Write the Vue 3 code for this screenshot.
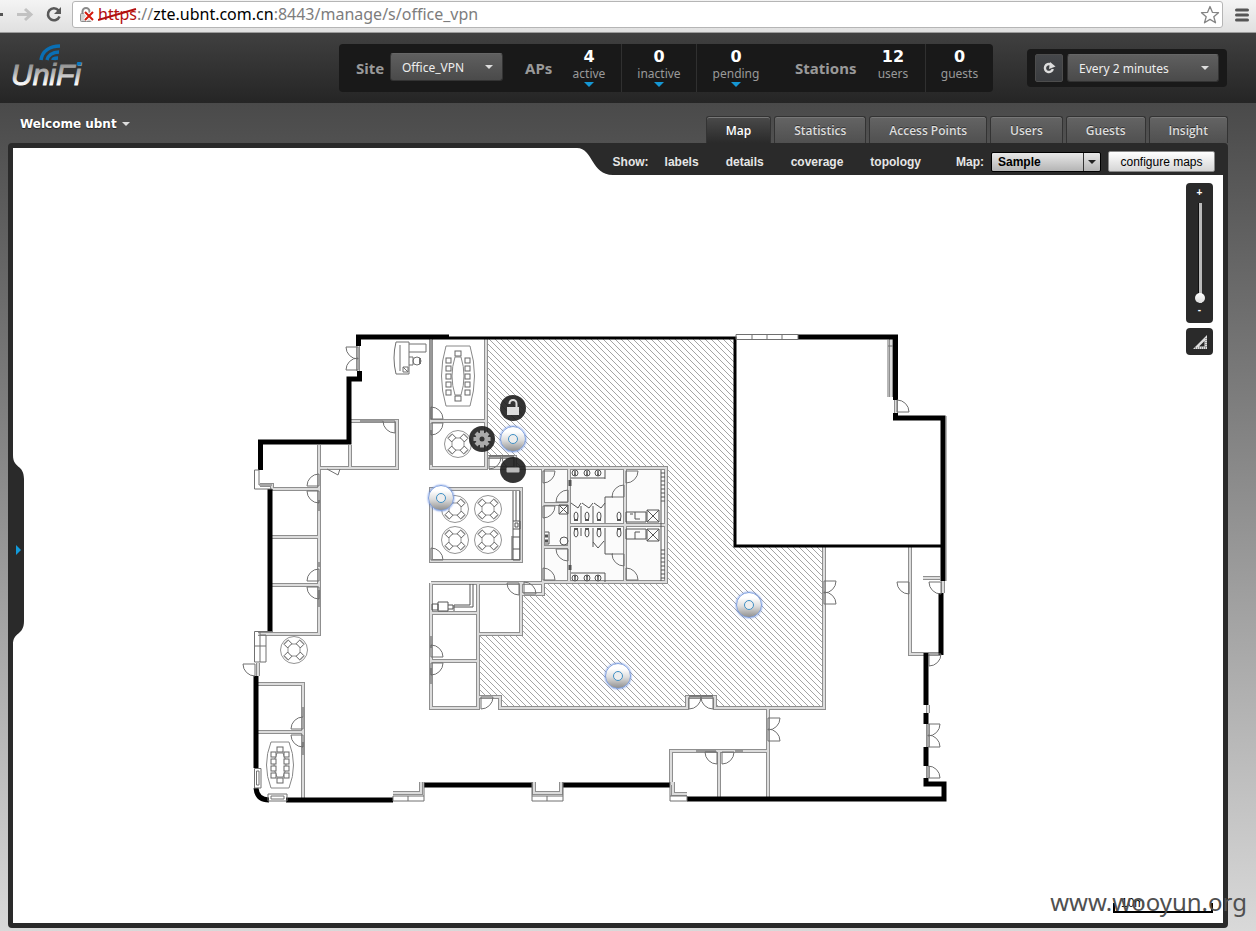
<script setup>
import { ref } from 'vue'

const MAP_X = 13
const MAP_Y = 148
const MAP_W = 1210
const MAP_H = 775

const site = ref('Office_VPN')
const interval = ref('Every 2 minutes')
const map = ref('Sample')
const zoom = ref(0)
const activeTab = ref('Map')

const tabs = ['Map', 'Statistics', 'Access Points', 'Users', 'Guests', 'Insight']
const layers = ['labels', 'details', 'coverage', 'topology']
const apStats = [
  { value: 4, label: 'active' },
  { value: 0, label: 'inactive' },
  { value: 0, label: 'pending' }
]
const stationStats = [
  { value: 12, label: 'users' },
  { value: 0, label: 'guests' }
]

const accessPoints = [[513, 439], [441, 498], [749, 605], [618, 676]]
const actions = [
  { name: 'unlock', at: [513, 408] },
  { name: 'settings', at: [482, 439] },
  { name: 'remove', at: [513, 470] }
]
const place = ([x, y]) => ({
  left: ((x - MAP_X) / MAP_W) * 100 + '%',
  top: ((y - MAP_Y) / MAP_H) * 100 + '%'
})

const heavy = [
  'M449 337H358.5V346', 'M359.5 371V379H349V442H260.5V470', 'M270 489V632', 'M256 676V768',
  'M256 788Q257 800 269 800', 'M286 800H393', 'M424 785H532', 'M563 785H670',
  'M687 799H944V784H926V778', 'M926 766V747', 'M926 724V713', 'M926 705V653', 'M941 655V593',
  'M943 581V418H895.5V413', 'M895.5 400V337H798'
].join('')

const walls = [
  'M431 339V468H486V339M431 421H486', 'M350 421H397V468H320M350 445V468',
  'M319 445V634H258M272 489H319M272 537H319M272 585H319',
  'M258 684H303V798M258 732H303', 'M431 489H521V561H431Z',
  'M431 583H543M431 583V708H478V583M431 613H478M431 661H478M478 634H521V583',
  'M522 594H543V468M489 468H666V582H543M569 468V582M543 504H569M543 547H569M569 525H666M625 468V582',
  'M488 457H515V468', 'M478 634V697H500V708H687V697H715V708H824V547',
  'M768 708V797M671 785V751H768M719 751V797', 'M910 547V654H941M923 578H940',
  'M258 663V676M260 485H272V489M393 793H421V782M534 782V793H561V782M673 782V794H687',
  'M928 705V713M928 724V747M928 766V778M943 581V593M896 400V413M891 339V397M358 346V371'
].join('')

const doors = [
  [358, 347, -1, 1], [358, 370, -1, -1], [431, 419, 1, -1], [431, 423, 1, 1], [395, 421, -1, 1],
  [319, 486, -1, -1], [319, 491, -1, 1], [319, 581, -1, -1], [319, 587, -1, 1], [431, 560, 1, -1],
  [543, 471, 1, 1], [568, 502, -1, -1], [543, 506, 1, 1], [568, 549, -1, 1], [543, 580, 1, -1],
  [626, 471, 1, 1], [626, 580, 1, -1], [624, 497, -1, -1], [624, 554, -1, 1], [489, 457, 1, 1],
  [514, 457, -1, 1], [519, 583, -1, 1], [524, 594, 1, -1], [431, 657, 1, -1], [431, 663, 1, 1],
  [481, 697, 1, 1], [689, 697, 1, 1], [713, 697, -1, 1], [717, 752, -1, 1], [722, 752, 1, 1],
  [824, 581, 1, 1], [824, 604, 1, -1], [768, 718, 1, 1], [768, 741, 1, -1], [909, 582, -1, 1],
  [941, 582, -1, 1], [929, 654, 1, 1], [928, 724, 1, 1], [928, 747, 1, -1], [928, 778, 1, -1],
  [897, 412, 1, -1], [303, 729, -1, -1], [303, 735, -1, 1], [255, 664, -1, 1]
]
const roundTables = [[458, 444], [455, 509], [488, 509], [455, 540], [488, 540], [294, 650]]
const confTables = [
  { x: 458, y: 376, w: 12, h: 30, rows: [-16, -8, 0, 8, 16] },
  { x: 280, y: 765, w: 9, h: 23, rows: [-11, -4, 3, 10] }
]
</script>

<template>
  <div class="page">
    <div class="browser">
      <svg class="nav-icons" viewBox="0 0 68 32" aria-hidden="true">
        <rect x="0" y="13" width="3" height="3" fill="#555" />
        <path d="M17 14.500H30M25 9L31 14.500L25 20" fill="none" stroke="#c2c2c2" stroke-width="3" />
        <path d="M58.500 10.300A6 6 0 1 0 59.500 16.500" fill="none" stroke="#595959" stroke-width="2.600" />
        <path d="M61 7V14H54Z" fill="#595959" />
      </svg>
      <div class="address">
        <svg class="lock" viewBox="0 0 16 18" aria-hidden="true">
          <path d="M3.500 8V5.500A3.500 3.500 0 0 1 10.500 5.500V8" fill="none" stroke="#8b8b8b" stroke-width="2" />
          <rect x="1.500" y="7.500" width="11" height="8" rx="1" fill="#d3d3d3" stroke="#8b8b8b" />
          <path d="M6 6L14 14M14 6L6 14" stroke="#fff" stroke-width="4" />
          <path d="M6 6L14 14M14 6L6 14" stroke="#d2190b" stroke-width="2" />
        </svg>
        <span class="url"><span class="scheme">https<svg viewBox="0 0 40 14" preserveAspectRatio="none" aria-hidden="true"><path d="M0 12L39 1" stroke="#b30f0f" stroke-width="2" /></svg></span>://<b>zte.ubnt.com.cn</b>:8443/manage/s/office_vpn</span>
        <svg class="star" viewBox="0 0 20 20" aria-hidden="true">
          <path d="M10 1.500L12.400 7.300L18.500 7.700L13.800 11.800L15.500 17.800L10 14.400L4.500 17.800L6.200 11.800L1.500 7.700L7.600 7.300Z" fill="#fff" stroke="#858585" stroke-width="1.300" stroke-linejoin="round" />
        </svg>
      </div>
      <svg class="menu" viewBox="0 0 14 14" aria-hidden="true">
        <path d="M1.500 2H12.500M1.500 7H12.500M1.500 12H12.500" stroke="#555" stroke-width="3" stroke-linecap="round" />
      </svg>
    </div>

    <header class="header">
      <svg class="logo" viewBox="0 0 80 52" role="img" aria-label="UniFi">
        <defs>
          <linearGradient id="metal" x1="0" y1="0" x2="0" y2="1">
            <stop offset="0" stop-color="#777" />
            <stop offset=".45" stop-color="#b5b5b5" />
            <stop offset=".8" stop-color="#fff" />
            <stop offset="1" stop-color="#aaa" />
          </linearGradient>
        </defs>
        <text x="1" y="42" class="logo-text" fill="url(#metal)" stroke="url(#metal)">UniFi</text>
        <g fill="none" stroke="#0a6fb4" stroke-width="3.500">
          <path d="M31 17C32 8 40 3 50 3" />
          <path d="M37 17C38 13 42 9 49 9" />
          <path d="M43 17C43 16 45 15 48 15" />
        </g>
        <path d="M67.500 19.500H71L70.500 22H67Z" fill="#0a7ac4" stroke="#0a7ac4" />
      </svg>

      <div class="stats">
        <label class="stats-title site" for="site">Site</label>
        <span class="dd dd-site">
          <select id="site" v-model="site"><option>Office_VPN</option></select>
        </span>
        <span class="stats-title aps">APs</span>
        <button v-for="s in apStats" :key="s.label" class="stat" :class="s.label" type="button">
          <strong>{{ s.value }}</strong><span>{{ s.label }}</span><i class="tri"></i>
        </button>
        <span class="stats-title stations">Stations</span>
        <button v-for="s in stationStats" :key="s.label" class="stat" :class="s.label" type="button">
          <strong>{{ s.value }}</strong><span>{{ s.label }}</span>
        </button>
      </div>

      <div class="refresh">
        <button type="button" class="reload" aria-label="Refresh now">
          <svg viewBox="0 0 14 14" aria-hidden="true">
            <path d="M10.800 8A4 4 0 1 1 8.800 3.500" fill="none" stroke="#ddd" stroke-width="2.400" />
            <path d="M8 1L13.500 5.500L7 8Z" fill="#ddd" />
          </svg>
        </button>
        <span class="dd dd-every">
          <select v-model="interval" aria-label="Refresh interval"><option>Every 2 minutes</option></select>
        </span>
      </div>
    </header>

    <div class="body">
      <div class="subheader">
        <button class="welcome" type="button">Welcome ubnt<i></i></button>
        <nav class="tabs">
          <a v-for="t in tabs" :key="t" href="#" :class="{ on: t === activeTab }" @click.prevent="activeTab = t">{{ t }}</a>
        </nav>
      </div>

      <main class="panel">
        <div class="toolbar">
          <svg class="swoop" viewBox="0 0 36 27" aria-hidden="true"><path d="M0 0C16 0 14 27 36 27V0Z" fill="#2a2a2a" /></svg>
          <div class="toolbar-body">
            <span class="show">Show:</span>
            <button v-for="l in layers" :key="l" type="button" class="layer">{{ l }}</button>
            <label class="map-label" for="map">Map:</label>
            <span class="map-select">
              <select id="map" v-model="map"><option>Sample</option></select>
            </span>
            <button type="button" class="configure">configure maps</button>
          </div>
        </div>

        <div class="canvas">
          <svg class="plan" :viewBox="`${MAP_X} ${MAP_Y} ${MAP_W} ${MAP_H}`" role="img" aria-label="Floor plan">
            <defs>
              <pattern id="hatch" width="6" height="6" patternUnits="userSpaceOnUse">
                <path d="M-1 -1L7 7M-1 5L1 7M5 -1L7 1" stroke="#a4a4a4" stroke-width="1" />
              </pattern>
              <g id="round" fill="#fff" stroke="#777" stroke-width=".8">
                <circle r="13.500" />
                <path d="M-3 -6H3L6 -3V3L3 6H-3L-6 3V-3Z" />
                <g v-for="a in [45, 135, 225, 315]" :key="a" :transform="`rotate(${a})`">
                  <rect x="6" y="-3" width="5" height="6" stroke="#444" />
                  <path d="M11.500 -3V3" />
                </g>
              </g>
            </defs>

            <path fill="url(#hatch)" d="M486 339H734V547H823V708H715V697H687V708H500V697H479V635H523V595H543V583H667V468H515V456H486Z" />
            <rect x="543" y="468" width="123" height="114" fill="#fbfbfb" />

            <path :d="walls" class="wall" />
            <path :d="walls" class="wall-core" />
            <path d="M449 338H735V546H941" class="mid" />
            <path :d="heavy" class="heavy" />

            <g class="thin">
              <path v-for="(d, i) in doors" :key="i" d="M0 0H12A12 12 0 0 1 0 12Z" :transform="`translate(${d[0]} ${d[1]}) scale(${d[2]} ${d[3]})`" />
              <path d="M736 334.500H798V339.500H736ZM752 334V339M767 334V339M782 334V339" />
              <path d="M254.500 470H259V485H272M254.500 470V489H272" />
              <path d="M254.500 631.500H272M254.500 631.500V662H260V632M254.500 646H266M260 635H266V662H260" />
              <path d="M254.500 768.500H261V788H254.500ZM256.500 771H259V785H256.500ZM268 794H287V801H268ZM271 796H284V799H271Z" />
              <path d="M393 796H424V801H393ZM408 796V801M532 796H563V801H532ZM547 796V801M670 796H687V801H670ZM424 782V796M532 782V796M563 782V796M670 782V796" />
              <path d="M327 469L338 475L340 469M946 416V581M888 339V397M888 346H893" />
              <path d="M396 342Q392 358 396 374H409V342ZM400 345V371M409 344H426V352H409M409 357H413V365H409M403 367H408V372H403ZM403 367L408 372" />
              <circle cx="417" cy="361" r="4" />
              <path d="M420 358V364" stroke-width="2" />
            </g>

            <use v-for="t in roundTables" :key="t.join()" href="#round" :x="t[0]" :y="t[1]" />

            <g v-for="t in confTables" :key="t.x" class="conf" :transform="`translate(${t.x} ${t.y})`">
              <path :d="`M${-t.w} ${-t.h}H${t.w}Q${t.w + 9} 0 ${t.w} ${t.h}H${-t.w}Q${-t.w - 9} 0 ${-t.w} ${-t.h}Z`" />
              <path :d="`M-3 ${-t.h + 11}H3Q9 0 3 ${t.h - 11}H-3Q-9 0 -3 ${-t.h + 11}Z`" />
              <g class="seat">
                <g v-for="r in t.rows" :key="r">
                  <rect :x="-t.w" :y="r - 2" width="5" height="5" />
                  <rect :x="t.w - 5" :y="r - 2" width="5" height="5" />
                </g>
                <rect x="-3" :y="-t.h + 5" width="6" height="5" />
                <rect x="-3" :y="t.h - 10" width="6" height="5" />
              </g>
            </g>

            <g class="fixture">
              <path d="M513 491V560H520V491M516 491V521M513 521H520V529H513M515 523H518V527H515ZM513 537H520M513 549H520M512 536V560" />
              <path d="M432 604H438V610H432ZM438 602H448V611H438ZM448 605H453V609H448M454 611V605H470V584M454 607H473V584" />
              <path d="M571 478H605M605 470V479M571 573H605M605 573V582" />
              <g v-for="x in [575, 587, 598]" :key="x">
                <circle :cx="x" cy="473" r="3" /><circle :cx="x" cy="578" r="3" />
                <path :d="`M${x} 471V475M${x - 1} 475H${x + 1}M${x} 576V580M${x - 1} 576H${x + 1}`" stroke-width="1.500" />
              </g>
              <g v-for="x in [576, 587, 599, 619]" :key="x">
                <ellipse :cx="x" cy="516" rx="2" ry="4" /><ellipse :cx="x" cy="533" rx="2" ry="4" />
                <path :d="`M${x - 2} 520H${x + 2}M${x - 2} 529H${x + 2}`" stroke-width="2" />
              </g>
              <path d="M581 506V523M593 506V523M605 497V523M571 503L578 508L581 503M582 503L589 508L593 503M594 503L601 508L605 503M605 497H613" />
              <path d="M581 528V536M593 528V547M605 528V554H613M593 542L598 548L604 541" />
              <path d="M626 512H646V522H626ZM626 529H646V539H626ZM635 512V519H640M630 514H633M635 539V532H640" />
              <path d="M647 510H659V522H647ZL659 522M659 510L647 522M647 529H659V541H647ZL659 541M659 529L647 541" />
              <path d="M559 505H568V514H559ZL568 514M568 505L559 514" />
              <path d="M661 470V581M661 473H665M661 477H665M661 481H665M661 485H665M661 489H665M661 493H665M661 497H665M661 501H665M661 550H665M661 554H665M661 558H665M661 562H665M661 566H665M661 570H665M661 574H665M661 578H665" />
              <circle cx="564" cy="541" r="4" />
              <path d="M545 532H549V544H545" />
              <path d="M545 536H548M545 541H548" stroke-width="3" />
              <path d="M570 480V486M570 565V570" stroke-width="3" />
              <path d="M431 340V420M431 430V465M319 500V511M319 562V567M319 590V607M303 707V717M303 742V755M360 421H383M431 636V648M431 668V684M489 456H514M689 696H713M696 751H716M735 751H743" />
            </g>
          </svg>

          <button v-for="p in accessPoints" :key="p.join()" type="button" class="pin ap" :style="place(p)" aria-label="Access point"><i></i></button>
          <button v-for="a in actions" :key="a.name" type="button" class="pin act" :style="place(a.at)" :aria-label="a.name">
            <svg viewBox="0 0 26 26" aria-hidden="true">
              <g v-if="a.name === 'unlock'">
                <rect x="7" y="12" width="12" height="8" fill="#ddd" />
                <path d="M9.500 9V8.500A3.500 3.500 0 0 1 16.500 8.500V12" fill="none" stroke="#ddd" stroke-width="2" />
              </g>
              <g v-else-if="a.name === 'settings'" fill="#aaa">
                <circle cx="13" cy="13" r="6.500" />
                <rect v-for="n in 8" :key="n" x="11" y="4.500" width="4" height="4" :transform="`rotate(${n * 45} 13 13)`" />
                <circle cx="13" cy="13" r="2.500" fill="#333" />
              </g>
              <rect v-else x="6.500" y="10.500" width="13" height="5" rx="1" fill="#bbb" />
            </svg>
          </button>
        </div>

        <div class="controls">
          <div class="zoom">
            <span>+</span>
            <input v-model="zoom" type="range" min="0" max="10" aria-label="Zoom">
            <span>-</span>
          </div>
          <button type="button" class="ruler" aria-label="Set map scale">
            <svg viewBox="0 0 16 16" aria-hidden="true">
              <path d="M1 15L15 1V15ZM7 12.500H12.500V7Z" fill="#ddd" fill-rule="evenodd" />
              <path d="M3 14H14V4" fill="none" stroke="#555" stroke-dasharray="1 1" />
            </svg>
          </button>
        </div>

        <button type="button" class="drawer" aria-label="Open side panel">
          <svg viewBox="0 0 11 190" aria-hidden="true">
            <path d="M0 0C0 14 11 9 11 24V166C11 181 0 176 0 190Z" fill="#2a2a2a" />
            <path d="M3 90L8 95L3 100Z" fill="#129bdb" />
          </svg>
        </button>

        <div class="scale">10m</div>
        <div class="watermark">www.wooyun.org</div>
      </main>
    </div>
  </div>
</template>

<style>
body {
  background: #d8d8d8;
}
</style>

<style scoped>
* {
  box-sizing: border-box;
}
.page {
  min-height: 100vh;
  display: flex;
  flex-direction: column;
  font-family: "Noto Sans", "Open Sans", sans-serif;
}
button {
  font: inherit;
  border: 0;
  padding: 0;
  background: none;
  color: inherit;
  cursor: pointer;
}
svg {
  display: block;
}

.browser {
  height: 33px;
  display: flex;
  align-items: flex-start;
  background: linear-gradient(#f4f4f4, #e0e0e0);
  border-bottom: 1px solid #9c9c9c;
}
.nav-icons {
  width: 68px;
  height: 32px;
}
.address {
  flex: 1;
  height: 27px;
  margin: 1px 12px 0 4px;
  padding: 0 2px 0 6px;
  display: flex;
  align-items: center;
  background: #fff;
  border: 1px solid #b5b5b5;
  border-radius: 3px;
}
.lock {
  width: 16px;
  height: 18px;
}
.url {
  margin: 0 0 1px 3px;
  flex: 1;
  font-size: 16px;
  line-height: 24px;
  color: #7d7d7d;
  white-space: nowrap;
}
.url b {
  font-weight: 400;
  color: #000;
}
.scheme {
  position: relative;
  color: #b30f0f;
}
.scheme svg {
  position: absolute;
  left: 0;
  top: 5px;
  width: 100%;
  height: 14px;
}
.star {
  width: 20px;
  height: 20px;
}
.menu {
  width: 14px;
  height: 14px;
  margin: 8px 7px 0 0;
}

.header {
  height: 70px;
  padding: 0 29px 0 10px;
  display: flex;
  align-items: flex-start;
  background: linear-gradient(#404040, #252525);
}
.logo {
  width: 80px;
  height: 52px;
  margin-top: 10px;
}
.logo-text {
  font: italic 30px "Liberation Sans", sans-serif;
  stroke-width: 1px;
}
.stats {
  margin: 11px 0 0 auto;
  height: 48px;
  display: flex;
  background: #191919;
  border-radius: 4px;
  overflow: hidden;
}
.stats-title {
  font-family: "Noto Sans", sans-serif;
  font-size: 15px;
  font-weight: 700;
  line-height: 48px;
  color: #999;
}
.site {
  width: 51px;
  padding-left: 17px;
}
.aps {
  width: 54px;
  padding-left: 22px;
}
.stations {
  width: 86px;
  padding-left: 20px;
}
.dd {
  position: relative;
  height: 28px;
}
.dd select {
  width: 100%;
  height: 28px;
  appearance: none;
  padding: 0 11px;
  font: 12px "Noto Sans", sans-serif;
  color: #eee;
  background: linear-gradient(#5f5f5f, #4a4a4a);
  border: 1px solid #333;
  border-top-color: #666;
  border-radius: 3px;
}
.dd::after {
  content: "";
  position: absolute;
  right: 10px;
  top: 12px;
  border: 4px solid transparent;
  border-top-color: #ddd;
  border-bottom: 0;
  pointer-events: none;
}
.dd-site {
  width: 113px;
  margin-top: 9px;
}
.dd-every {
  width: 152px;
}
.stat {
  width: 75px;
  padding-top: 4px;
  display: flex;
  flex-direction: column;
  align-items: center;
  color: #999;
  font-size: 12px;
  line-height: 16px;
}
.stat + .stat {
  border-left: 1px solid #303030;
}
.active,
.users {
  width: 64px;
}
.pending {
  width: 79px;
}
.guests {
  width: 68px;
}
.stat strong {
  font-family: "DejaVu Sans", sans-serif;
  font-size: 16px;
  line-height: 18px;
  color: #fff;
}
.tri {
  border: 5px solid transparent;
  border-top-color: #1597d4;
  border-bottom: 0;
}
.refresh {
  margin: 16px 0 0 34px;
  padding: 5px 8px;
  height: 38px;
  display: flex;
  gap: 4px;
  background: #191919;
  border-radius: 4px;
}
.reload {
  width: 28px;
  height: 28px;
  padding: 6px;
  background: linear-gradient(#45474a, #3a3c3f);
  border: 1px solid #4d4d4d;
  border-radius: 2px;
}
.reload svg {
  width: 14px;
  height: 14px;
}

.body {
  flex: 1;
  padding: 0 28px 3px 8px;
  background: linear-gradient(#4a4a4a, #d9d9d9);
}
.subheader {
  height: 40px;
  display: flex;
  justify-content: space-between;
}
.welcome {
  margin-left: 12px;
  height: 42px;
  display: flex;
  align-items: center;
  gap: 5px;
  color: #fff;
  font: 700 12px "DejaVu Sans", sans-serif;
  text-shadow: 0 1px 1px #222;
}
.welcome i {
  border: 4px solid transparent;
  border-top-color: #ddd;
  border-bottom: 0;
}
.tabs {
  display: flex;
  align-items: flex-end;
  gap: 3px;
}
.tabs a {
  height: 27px;
  padding: 0 19px;
  font-family: "Open Sans", sans-serif;
  font-size: 12px;
  font-weight: 600;
  line-height: 28px;
  color: #ddd;
  text-decoration: none;
  text-shadow: 0 -1px 0 #333;
  background: linear-gradient(#646464, #505050);
  border: 1px solid #333;
  border-bottom: 0;
  border-radius: 3px 3px 0 0;
  box-shadow: inset 0 1px 0 #777;
}
.tabs a.on {
  background: linear-gradient(#4a4a4a, #2a2a2a);
  color: #fff;
}

.panel {
  position: relative;
  border: 5px solid #2a2a2a;
  border-radius: 4px;
  background: #fff;
}
.toolbar {
  position: absolute;
  z-index: 2;
  top: 0;
  right: 0;
  display: flex;
}
.swoop {
  width: 36px;
  height: 27px;
}
.toolbar-body {
  height: 27px;
  padding-right: 8px;
  display: flex;
  align-items: center;
  background: #2a2a2a;
  color: #e6e6e6;
  font: 700 12px/16px "Liberation Sans", Arial, sans-serif;
}
.show {
  margin-right: 16px;
}
.layer {
  margin-right: 27px;
}
.map-label {
  margin: 0 7px 0 8px;
}
.map-select {
  position: relative;
}
.map-select select {
  display: block;
  width: 110px;
  height: 20px;
  padding: 0 6px;
  appearance: none;
  font: 700 12px "Liberation Sans", Arial, sans-serif;
  color: #000;
  background: linear-gradient(#e8e8e8, #b4b4b4);
  border: 1px solid #000;
  border-radius: 2px;
}
.map-select::after {
  content: "";
  position: absolute;
  right: 5px;
  top: 8px;
  border: 4px solid transparent;
  border-top-color: #222;
  border-bottom: 0;
  pointer-events: none;
}
.map-select::before {
  content: "";
  position: absolute;
  right: 17px;
  top: 1px;
  height: 18px;
  border-left: 1px solid #333;
}
.configure {
  margin-left: 7px;
  width: 107px;
  height: 21px;
  font-weight: 400;
  color: #000;
  background: linear-gradient(#fff, #d5d5d5);
  border: 1px solid #888;
  border-radius: 2px;
}

.canvas {
  position: relative;
}
.plan {
  width: 100%;
  height: auto;
}
.wall {
  fill: none;
  stroke: #8f8f8f;
  stroke-width: 4;
}
.wall-core {
  fill: none;
  stroke: #dcdcdc;
  stroke-width: 2;
}
.mid {
  fill: none;
  stroke: #000;
  stroke-width: 3;
}
.heavy {
  fill: none;
  stroke: #000;
  stroke-width: 5;
}
.thin {
  fill: none;
  stroke: #707070;
  stroke-width: 1;
}
.conf {
  fill: #fff;
  stroke: #888;
  stroke-width: 1;
}
.seat {
  stroke: #666;
}
.fixture {
  fill: none;
  stroke: #555;
  stroke-width: 1;
}
.pin {
  position: absolute;
  width: 26px;
  height: 26px;
  border-radius: 50%;
  transform: translate(-50%, -50%);
}
.ap {
  display: flex;
  align-items: center;
  justify-content: center;
  background: linear-gradient(#fff 20%, #ddd 55%, #909090);
  border: 1px solid #7e9fdf;
  box-shadow: 0 0 2px #4a78e0;
}
.ap i {
  width: 10px;
  height: 10px;
  border: 1px solid #3f8fc4;
  border-radius: 50%;
  background: #eee;
}
.act {
  background: rgba(30, 30, 30, .9);
}

.controls {
  position: absolute;
  z-index: 2;
  top: 35px;
  right: 10px;
  width: 27px;
  display: flex;
  flex-direction: column;
  gap: 5px;
}
.zoom {
  height: 140px;
  padding: 3px 0;
  display: flex;
  flex-direction: column;
  align-items: center;
  background: #2a2a2a;
  border-radius: 4px;
  color: #fff;
  font: 700 10px/14px "Liberation Sans", Arial, sans-serif;
}
.zoom input {
  appearance: none;
  writing-mode: vertical-lr;
  direction: rtl;
  width: 12px;
  height: 100px;
  margin: 3px 0 0;
  background: linear-gradient(90deg, #111 1px, #bbb 1px) center / 4px 100% no-repeat;
}
.zoom input::-webkit-slider-thumb {
  appearance: none;
  width: 10px;
  height: 10px;
  border-radius: 50%;
  background: linear-gradient(#fff, #ddd);
}
.ruler {
  height: 27px;
  display: flex;
  align-items: center;
  justify-content: center;
  background: #2a2a2a;
  border-radius: 4px;
}
.ruler svg {
  width: 16px;
  height: 16px;
}
.drawer {
  position: absolute;
  left: 0;
  top: 307px;
}
.drawer svg {
  width: 11px;
  height: 190px;
}
.scale {
  position: absolute;
  right: 10px;
  bottom: 10px;
  width: 100px;
  height: 10px;
  padding-left: 6px;
  border: 2px solid #000;
  border-top: 0;
  color: #000;
  font: 12px/1px "Liberation Sans", Arial, sans-serif;
}
.watermark {
  position: absolute;
  right: -24px;
  bottom: 4px;
  font-size: 24px;
  line-height: 34px;
  color: #505050;
}
</style>
